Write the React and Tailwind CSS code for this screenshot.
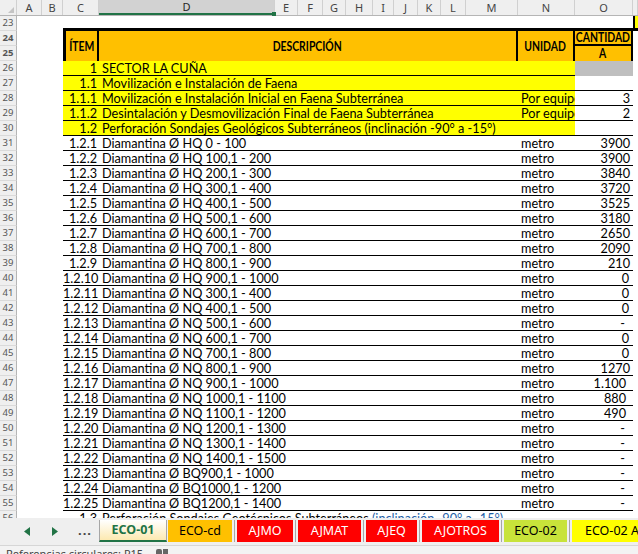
const ROWGRID = "grid h-[15px] grid-cols-[17px_46px_36px_419px_57px_58px_1fr]";

const LETTERS = ["A", "B", "C", "D", "E", "F", "G", "H", "I", "J", "K", "L", "M", "N", "O", ""];

const SECTIONS = [
  { n: 26, item: "1", desc: "SECTOR LA CUÑA", gray: true },
  { n: 27, item: "1.1", desc: "Movilización e Instalación de Faena" },
  { n: 28, item: "1.1.1", desc: "Movilización e Instalación Inicial en Faena Subterránea", unit: "Por equipo", qty: "3" },
  { n: 29, item: "1.1.2", desc: "Desintalación y Desmovilización Final de Faena Subterránea", unit: "Por equipo", qty: "2" },
  { n: 30, item: "1.2", desc: "Perforación Sondajes Geológicos Subterráneos (inclinación -90° a -15°)" },
];

const ITEMS = [
  ["1.2.1", "HQ 0 - 100", "3900"],
  ["1.2.2", "HQ 100,1 - 200", "3900"],
  ["1.2.3", "HQ 200,1 - 300", "3840"],
  ["1.2.4", "HQ 300,1 - 400", "3720"],
  ["1.2.5", "HQ 400,1 - 500", "3525"],
  ["1.2.6", "HQ 500,1 - 600", "3180"],
  ["1.2.7", "HQ 600,1 - 700", "2650"],
  ["1.2.8", "HQ 700,1 - 800", "2090"],
  ["1.2.9", "HQ 800,1 - 900", "210"],
  ["1.2.10", "HQ 900,1 - 1000", "0"],
  ["1.2.11", "NQ 300,1 - 400", "0"],
  ["1.2.12", "NQ 400,1 - 500", "0"],
  ["1.2.13", "NQ 500,1 - 600", "-"],
  ["1.2.14", "NQ 600,1 - 700", "0"],
  ["1.2.15", "NQ 700,1 - 800", "0"],
  ["1.2.16", "NQ 800,1 - 900", "1270"],
  ["1.2.17", "NQ 900,1 - 1000", "1.100"],
  ["1.2.18", "NQ 1000,1 - 1100", "880"],
  ["1.2.19", "NQ 1100,1 - 1200", "490"],
  ["1.2.20", "NQ 1200,1 - 1300", "-"],
  ["1.2.21", "NQ 1300,1 - 1400", "-"],
  ["1.2.22", "NQ 1400,1 - 1500", "-"],
  ["1.2.23", "BQ900,1 - 1000", "-"],
  ["1.2.24", "BQ1000,1 - 1200", "-"],
  ["1.2.25", "BQ1200,1 - 1400", "-"],
];

// accounting-formatted cells sit a bit further from the right edge
const PADDED = ["1.100", "880", "490"];

function qtyPad(q) {
  if (q === "-") return "pr-[8px]";
  if (PADDED.includes(q)) return "pr-[7px]";
  if (q === "0") return "pr-[4px]";
  return "pr-[3px]";
}

function RowNum({ n }) {
  return (
    <div className="border-b border-r border-b-[#dadada] border-r-[#b5b5b5] bg-[#efefef] text-center font-['Noto_Sans',sans-serif] text-[9.5px] leading-[14px] text-[#555]">
      {n}
    </div>
  );
}

function ColumnHeader() {
  return (
    <div className="grid h-[16px] shrink-0 grid-cols-[17px_25px_21px_36px_176px_23px_25px_23px_27px_21px_24px_23px_25px_52px_57px_58px_1fr] border-b border-[#b5b5b5] bg-[#efefef] font-['Noto_Sans',sans-serif] text-[11px] text-[#444]">
      <div className="relative border-r border-[#d0d0d0]">
        <div className="absolute bottom-[2px] right-[2px] h-0 w-0 border-b-[6px] border-l-[6px] border-b-[#c4c4c4] border-l-transparent" />
      </div>
      {LETTERS.map((l, i) =>
        l === "D" ? (
          <div key={i} className="relative flex items-center justify-center border-b-2 border-r border-b-[#217346] border-r-[#d0d0d0] bg-[#d2d2d2] leading-none text-[#262626]">
            {l}
            <div className="absolute bottom-[-3px] right-[-2px] h-[4px] w-[4px] bg-[#217346]" />
          </div>
        ) : (
          <div key={i} className="flex items-center justify-center border-r border-[#d0d0d0] leading-none">
            {l}
          </div>
        )
      )}
    </div>
  );
}

function Row23() {
  return (
    <div className={ROWGRID}>
      <RowNum n={23} />
      <div />
      <div className="col-span-4 border-b-[3px] border-black" />
      <div className="border-b-[3px] border-l-2 border-black bg-[#ffff00]" />
    </div>
  );
}

function Narrow({ children }) {
  return <span className="inline-block scale-x-[0.8] whitespace-nowrap">{children}</span>;
}

function HeaderRows() {
  return (
    <div className="grid grid-cols-[17px_46px_36px_419px_57px_58px_1fr] grid-rows-[15px_15px] text-[13px] font-bold leading-none">
      <div className="col-start-1 row-start-1">
        <RowNum n={24} />
      </div>
      <div className="col-start-1 row-start-2">
        <RowNum n={25} />
      </div>
      <div className="col-start-3 row-span-2 row-start-1 flex items-center justify-center border-l-[3px] border-r-2 border-black bg-[#ffc000] pl-[1px]">
        <Narrow>ÍTEM</Narrow>
      </div>
      <div className="col-start-4 row-span-2 row-start-1 flex items-center justify-center border-r-2 border-black bg-[#ffc000]">
        <Narrow>DESCRIPCIÓN</Narrow>
      </div>
      <div className="col-start-5 row-span-2 row-start-1 flex items-center justify-center border-r-2 border-black bg-[#ffc000]">
        <Narrow>UNIDAD</Narrow>
      </div>
      <div className="col-start-6 row-start-1 flex items-center justify-center border-b-2 border-r-2 border-black bg-[#ffc000]">
        <Narrow>CANTIDAD</Narrow>
      </div>
      <div className="col-start-6 row-start-2 flex items-center justify-center border-r-2 border-black bg-[#ffc000]">
        <Narrow>A</Narrow>
      </div>
    </div>
  );
}

function SectionRow({ n, item, desc, unit, qty, gray }) {
  return (
    <div className={`${ROWGRID} text-[12.7px] leading-[14px]`}>
      <RowNum n={n} />
      <div />
      <div className="whitespace-nowrap border-b border-black bg-[#ffff00] pr-[2px] text-right">{item}</div>
      <div className="whitespace-nowrap border-b border-black bg-[#ffff00] pl-[3px]">{desc}</div>
      <div className="overflow-hidden whitespace-nowrap border-b border-black bg-[#ffff00] pl-[3px]">{unit}</div>
      <div className={`border-b pr-[3px] text-right ${gray ? "border-b-[#bfbfbf] bg-[#bfbfbf]" : "border-black"}`}>{qty}</div>
      <div />
    </div>
  );
}

function ItemRow({ n, item, desc, qty }) {
  return (
    <div className={`${ROWGRID} text-[12.7px] leading-[14px]`}>
      <RowNum n={n} />
      <div />
      <div className="whitespace-nowrap border-b border-black pr-[2px] text-right">{item}</div>
      <div className="whitespace-nowrap border-b border-black pl-[3px]">Diamantina Ø {desc}</div>
      <div className="whitespace-nowrap border-b border-black pl-[3px]">metro</div>
      <div className={`border-b border-black text-right ${qtyPad(qty)}`}>{qty}</div>
      <div />
    </div>
  );
}

function Row56() {
  return (
    <div className={`${ROWGRID} text-[12.7px] leading-[14px]`}>
      <RowNum n={56} />
      <div />
      <div className="whitespace-nowrap pr-[2px] text-right">1.3</div>
      <div className="whitespace-nowrap pl-[3px]">
        Perforación Sondajes Geotécnicos Subterráneos <span className="text-[#1f5fa8]">(inclinación -90° a -15°)</span>
      </div>
      <div />
      <div />
      <div />
    </div>
  );
}

function Tab({ label, className }) {
  return (
    <div className={`flex h-[22px] shrink-0 items-center justify-center whitespace-nowrap ${className}`}>
      {label}
    </div>
  );
}

function Sep() {
  return <div className="mx-[2px] h-[22px] w-px shrink-0 bg-[#a6a6a6]" />;
}

function TabBar() {
  return (
    <div className="flex h-[27px] shrink-0 items-start bg-[#efefef] pt-[2px] font-['Noto_Sans',sans-serif] text-[12.5px]">
      <div className="flex h-[22px] w-[99px] shrink-0 items-center">
        <svg className="ml-[24px]" width="6" height="9" viewBox="0 0 6 9">
          <polygon points="6,0 6,9 0,4.5" fill="#217346" />
        </svg>
        <svg className="ml-[22px]" width="6" height="9" viewBox="0 0 6 9">
          <polygon points="0,0 0,9 6,4.5" fill="#217346" />
        </svg>
        <span className="ml-[20px] text-[13px] font-bold tracking-[1px] text-[#444]">...</span>
      </div>
      <Tab
        label="ECO-01"
        className="w-[68px] border-x border-b-2 border-x-[#a6a6a6] border-b-[#217346] bg-[linear-gradient(180deg,#ffffff,#fde9b0)] font-bold text-[#217346]"
      />
      <Tab label="ECO-cd" className="ml-px w-[64px] bg-[#ffc000] text-black" />
      <Sep />
      <Tab label="AJMO" className="w-[56px] bg-[#ff0000] text-white" />
      <Sep />
      <Tab label="AJMAT" className="w-[63px] bg-[#ff0000] text-white" />
      <Sep />
      <Tab label="AJEQ" className="w-[51px] bg-[#ff0000] text-white" />
      <Sep />
      <Tab label="AJOTROS" className="w-[77px] bg-[#ff0000] text-white" />
      <Sep />
      <Tab label="ECO-02" className="w-[63px] bg-[#c8e33a] text-black" />
      <Sep />
      <Tab label="ECO-02 A" className="w-[80px] justify-start bg-[#ffff00] pl-[13px] text-black" />
    </div>
  );
}

function StatusBar() {
  return (
    <div className="flex h-[9px] shrink-0 items-start overflow-hidden border-t border-[#d6d6d6] bg-[#f3f3f3] pl-[6px] font-['Noto_Sans',sans-serif] text-[11px] leading-[14px] text-[#444]">
      <span className="mt-[1px]">Referencias circulares: P15</span>
      <div className="ml-[13px] mt-[3px] flex gap-[1px]">
        <div className="h-[8px] w-[6px] rounded-[2px] bg-[#666]" />
        <div className="h-[5px] w-[5px] bg-[#666]" />
      </div>
    </div>
  );
}

export default function App() {
  return (
    <div className="flex h-[554px] w-[638px] flex-col overflow-hidden bg-white font-['Lato',sans-serif] text-black">
      <ColumnHeader />
      <div className="h-[502px] shrink-0 overflow-hidden">
        <Row23 />
        <HeaderRows />
        {SECTIONS.map((s) => (
          <SectionRow key={s.n} {...s} />
        ))}
        {ITEMS.map(([item, desc, qty], i) => (
          <ItemRow key={item} n={31 + i} item={item} desc={desc} qty={qty} />
        ))}
        <Row56 />
      </div>
      <TabBar />
      <StatusBar />
    </div>
  );
}
